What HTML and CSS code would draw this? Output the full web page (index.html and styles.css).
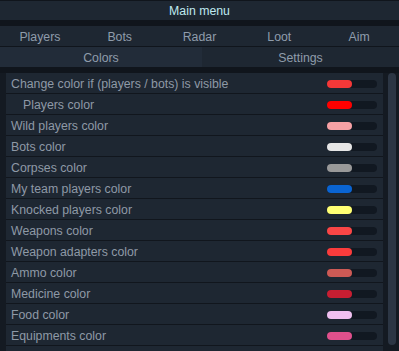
FILE: index.html
```html
<!DOCTYPE html>
<html>
<head>
<meta charset="utf-8">
<link rel="stylesheet" href="styles.css">
</head>
<body>
<div class="window">
  <div class="title">Main menu</div>
  <div class="tabs tabs5">
    <div class="tab">Players</div>
    <div class="tab">Bots</div>
    <div class="tab">Radar</div>
    <div class="tab">Loot</div>
    <div class="tab">Aim</div>
  </div>
  <div class="tabs tabs2">
    <div class="tab active">Colors</div>
    <div class="tab">Settings</div>
  </div>
  <div class="body">
    <div class="list">
      <div class="row"><span class="label">Change color if (players / bots) is visible</span><span class="swatch"><span class="fill" style="background:#f53838"></span></span></div>
      <div class="row"><span class="label indent">Players color</span><span class="swatch"><span class="fill" style="background:#ff0000"></span></span></div>
      <div class="row"><span class="label">Wild players color</span><span class="swatch"><span class="fill" style="background:#f7a1a5"></span></span></div>
      <div class="row"><span class="label">Bots color</span><span class="swatch"><span class="fill" style="background:#e6e6e6"></span></span></div>
      <div class="row"><span class="label">Corpses color</span><span class="swatch"><span class="fill" style="background:#999999"></span></span></div>
      <div class="row"><span class="label">My team players color</span><span class="swatch"><span class="fill" style="background:#0a64d2"></span></span></div>
      <div class="row"><span class="label">Knocked players color</span><span class="swatch"><span class="fill" style="background:#ffff73"></span></span></div>
      <div class="row"><span class="label">Weapons color</span><span class="swatch"><span class="fill" style="background:#fa4646"></span></span></div>
      <div class="row"><span class="label">Weapon adapters color</span><span class="swatch"><span class="fill" style="background:#fa3c3c"></span></span></div>
      <div class="row"><span class="label">Ammo color</span><span class="swatch"><span class="fill" style="background:#cd5a55"></span></span></div>
      <div class="row"><span class="label">Medicine color</span><span class="swatch"><span class="fill" style="background:#c81e32"></span></span></div>
      <div class="row"><span class="label">Food color</span><span class="swatch"><span class="fill" style="background:#f0c0f0"></span></span></div>
      <div class="row"><span class="label">Equipments color</span><span class="swatch"><span class="fill" style="background:#e0508c"></span></span></div>
      <div class="row"></div>
    </div>
    <div class="scroll"><div class="thumb"></div></div>
  </div>
</div>
</body>
</html>
```

FILE: styles.css
```css
html, body {
  margin: 0;
  padding: 0;
  background: #10151c;
}
body {
  width: 399px;
  height: 351px;
  overflow: hidden;
  font-family: "Liberation Sans", Arial, sans-serif;
  font-size: 12.3px;
}
.window {
  display: flex;
  flex-direction: column;
  height: 351px;
  padding-top: 1px;
  box-sizing: border-box;
}
.title {
  height: 19px;
  box-sizing: border-box;
  padding-top: 2px;
  line-height: 17px;
  background: #1e2732;
  color: #bfe9f0;
  text-align: center;
  flex: none;
}
.tabs {
  display: grid;
  flex: none;
  height: 20px;
  background: #1e2732;
}
.tabs5 {
  margin-top: 6px;
  grid-template-columns: repeat(5, 1fr);
}
.tabs2 {
  margin-top: 1px;
  grid-template-columns: 202px 1fr;
}
.tab {
  box-sizing: border-box;
  padding-top: 2px;
  line-height: 18px;
  text-align: center;
  color: #8f9cab;
}
.tab.active {
  background: #222c39;
}
.body {
  display: flex;
  flex: 1;
  min-height: 0;
  margin-top: 6px;
  background: #141a22;
}
.list {
  width: 377px;
  margin-left: 6px;
  display: flex;
  flex-direction: column;
  gap: 1px;
  overflow: hidden;
  background: #11161d;
}
.row {
  flex: none;
  height: 20px;
  box-sizing: border-box;
  background: #1e2732;
  display: flex;
  align-items: center;
  justify-content: space-between;
  padding: 1px 6px 0 5px;
}
.label {
  color: #8e99a6;
  white-space: nowrap;
}
.label.indent {
  padding-left: 12px;
}
.swatch {
  width: 50px;
  height: 8px;
  border-radius: 4px;
  background: #111821;
  display: flex;
}
.fill {
  width: 25px;
  height: 8px;
  border-radius: 4px;
}
.scroll {
  margin-left: 5px;
  width: 8px;
  padding-bottom: 6px;
}
.thumb {
  height: 272px;
  border-radius: 4px;
  background: #2c3644;
}
```
